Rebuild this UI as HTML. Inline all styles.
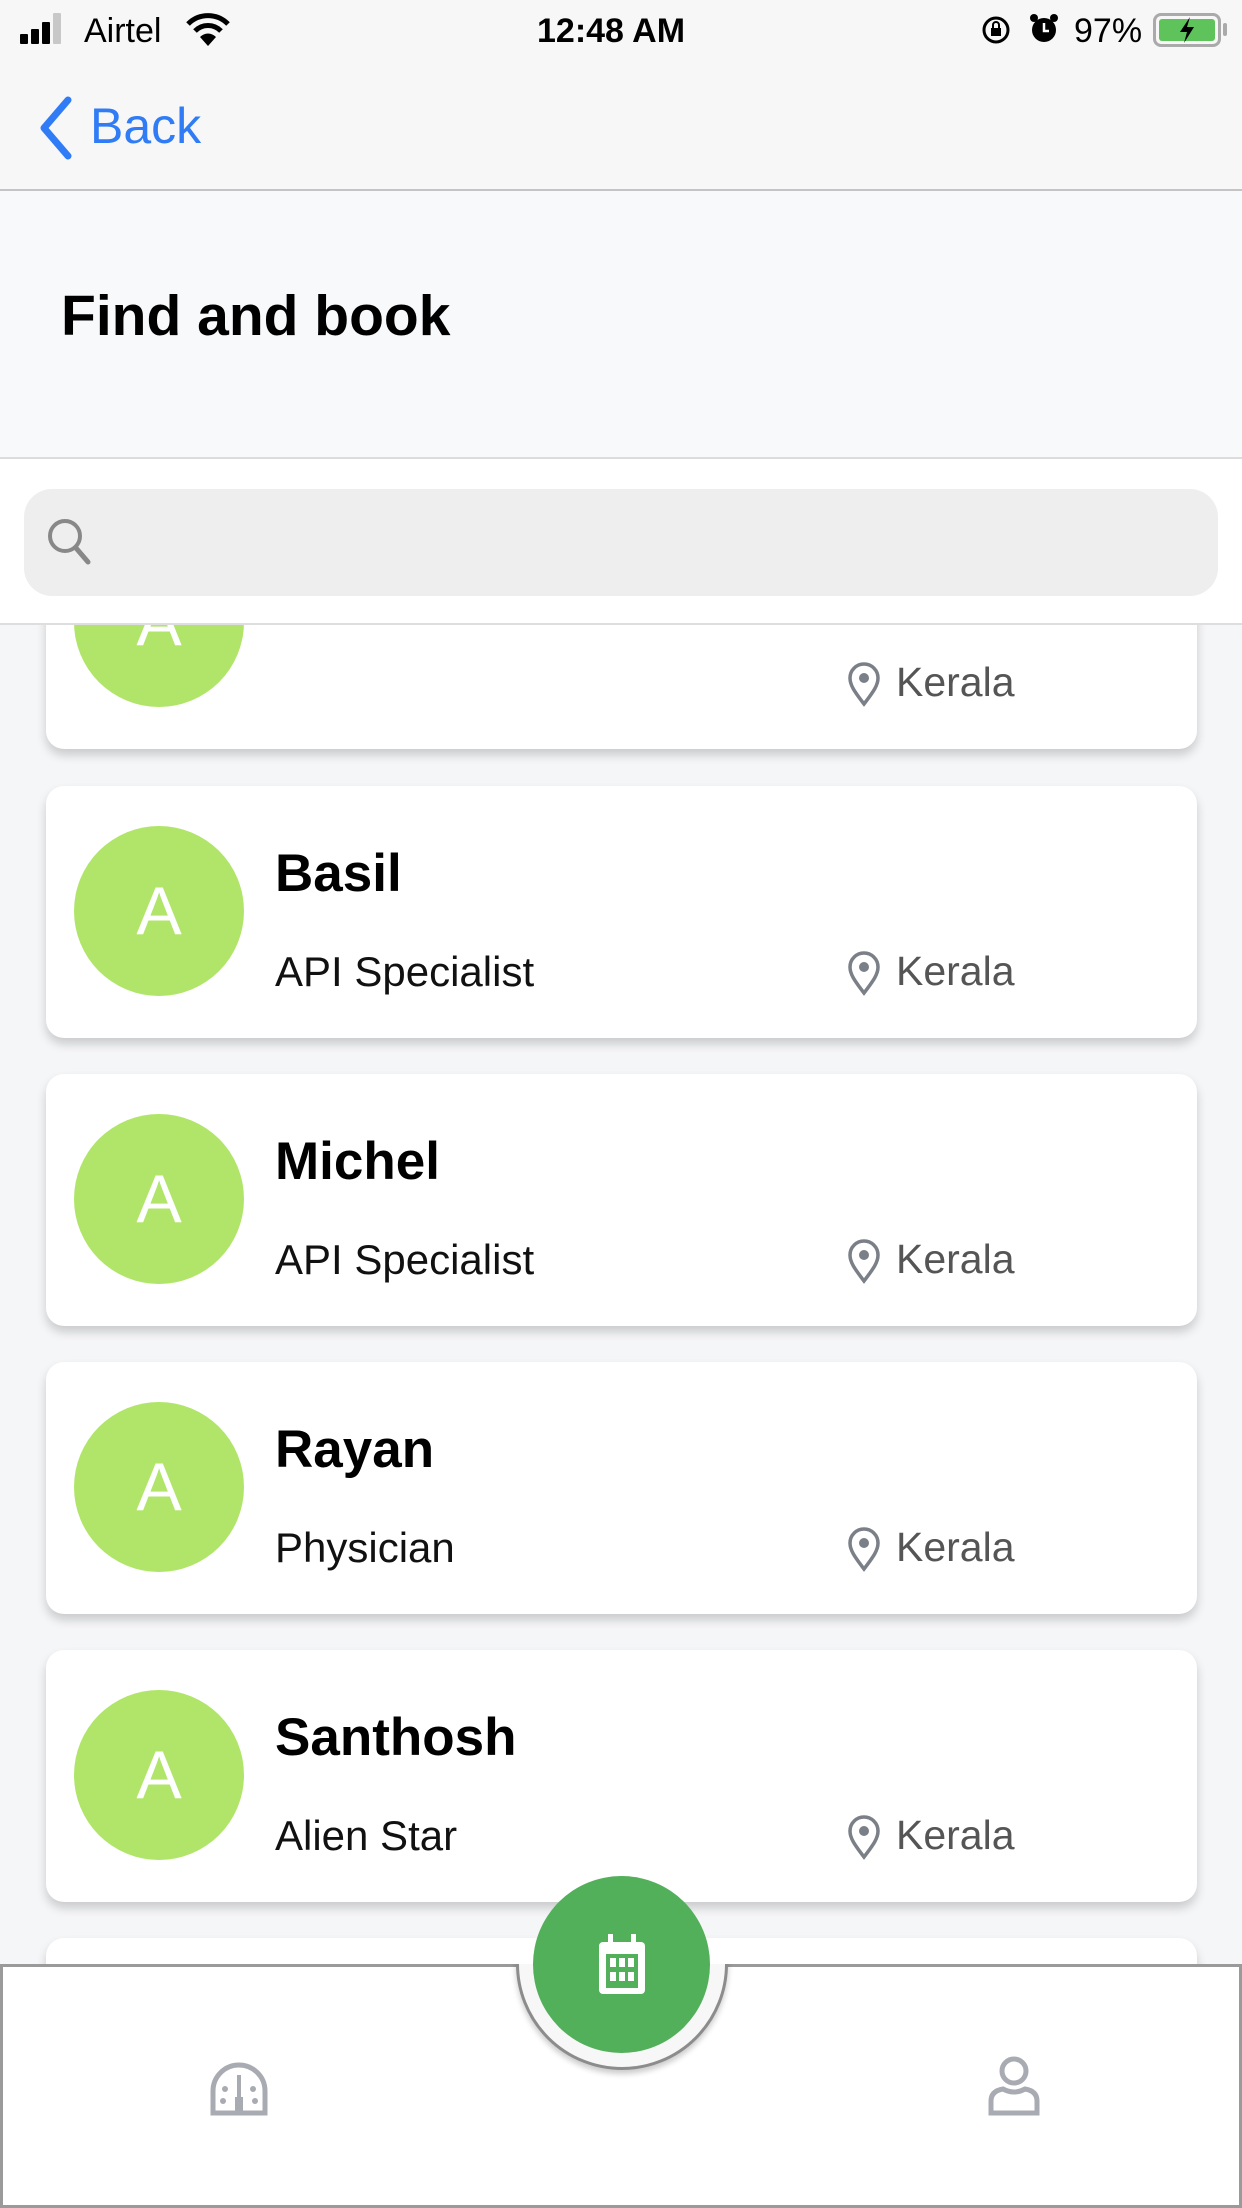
<!DOCTYPE html>
<html><head><meta charset="utf-8"><style>
*{margin:0;padding:0;box-sizing:border-box}
body{width:1242px;height:2208px;overflow:hidden;background:#f5f6f8;font-family:"Liberation Sans",sans-serif;position:relative}
.abs{position:absolute}
.status{left:0;top:0;width:1242px;height:191px;background:#f7f7f7;border-bottom:2px solid #c4c4c6}
.st{font-size:34px;color:#000;top:12px}
.head{left:0;top:191px;width:1242px;height:268px;background:#f8f9fb;border-bottom:2px solid #dcdcdc}
.title{left:61px;top:92px;font-size:57px;font-weight:bold;color:#000}
.sarea{left:0;top:459px;width:1242px;height:166px;background:#fff;border-bottom:2px solid #dedede;z-index:5}
.search{left:24px;top:30px;width:1194px;height:107px;background:#eeeeee;border-radius:28px}
.card{left:46px;width:1151px;height:252px;background:#fff;border-radius:18px;box-shadow:0 6px 10px rgba(0,0,0,.18)}
.av{left:28px;top:40px;width:170px;height:170px;border-radius:50%;background:#b0e56a;color:#fff;font-size:68px;text-align:center;line-height:170px}
.nm{left:229px;top:57px;font-size:53px;font-weight:bold;color:#000}
.sub{left:229px;top:162px;font-size:42px;color:#111}
.loc{left:804px;top:162px;font-size:41px;color:#555}
.loc svg{position:absolute;left:-4px;top:2px}
.loc span{margin-left:46px}
.bar{left:0;top:1964px;width:1242px;height:244px;background:#fff;border:3px solid #9a9a9a;border-top-width:3px;z-index:6}
</style></head><body>
<div class="abs status">
  <div class="abs" style="left:20px;top:34px;width:8px;height:10px;background:#000;border-radius:1px"></div>
  <div class="abs" style="left:31px;top:29px;width:8px;height:15px;background:#000;border-radius:1px"></div>
  <div class="abs" style="left:42px;top:22px;width:8px;height:22px;background:#000;border-radius:1px"></div>
  <div class="abs" style="left:53px;top:13px;width:8px;height:31px;background:#c8c8c8;border-radius:1px"></div>
  <div class="abs st" style="left:84px">Airtel</div>
  <svg class="abs" style="left:186px;top:12px" width="44" height="36" viewBox="0 0 44 36"><path d="M2 12 A28 28 0 0 1 42 12" stroke="#000" stroke-width="5" fill="none"/><path d="M9 19 A18 18 0 0 1 35 19" stroke="#000" stroke-width="5" fill="none"/><path d="M22 34 L14 25 A11 11 0 0 1 30 25Z" fill="#000"/></svg>
  <div class="abs st" style="left:537px;font-weight:bold;font-size:34px">12:48 AM</div>
  <svg class="abs" style="left:980px;top:14px" width="32" height="32" viewBox="0 0 32 32"><circle cx="16" cy="16" r="12" fill="none" stroke="#000" stroke-width="3"/><rect x="11" y="14" width="10" height="8" fill="#000"/><path d="M13 14v-3a3 3 0 0 1 6 0v3" stroke="#000" stroke-width="2" fill="none"/></svg>
  <svg class="abs" style="left:1028px;top:12px" width="32" height="34" viewBox="0 0 32 34"><circle cx="16" cy="18" r="12" fill="#000"/><path d="M16 11v8h5" stroke="#fff" stroke-width="2.5" fill="none"/><circle cx="6" cy="6" r="4" fill="#000"/><circle cx="26" cy="6" r="4" fill="#000"/></svg>
  <div class="abs st" style="left:1074px">97%</div>
  <div class="abs" style="left:1153px;top:13px;width:68px;height:34px;border:3px solid #aaa;border-radius:8px;padding:3px"><div style="width:100%;height:100%;background:#5dc35a;border-radius:3px"></div></div>
  <div class="abs" style="left:1223px;top:23px;width:4px;height:13px;background:#aaa;border-radius:2px"></div>
  <svg class="abs" style="left:1172px;top:15px" width="30" height="30" viewBox="0 0 30 30"><path d="M18 2 L8 17 H15 L12 28 L22 12 H15Z" fill="#000"/></svg>
  <svg class="abs" style="left:36px;top:96px" width="40" height="64" viewBox="0 0 40 64"><path d="M32 4 L8 32 L32 60" stroke="#2f7cf6" stroke-width="7" fill="none" stroke-linecap="round" stroke-linejoin="round"/></svg>
  <div class="abs" style="left:90px;top:97px;font-size:50px;color:#2f7cf6">Back</div>
</div>
<div class="abs head"><div class="abs title">Find and book</div></div>
<div class="abs sarea"><div class="abs search">
  <svg class="abs" style="left:20px;top:26px" width="54" height="56" viewBox="0 0 54 56"><circle cx="21" cy="21" r="15" fill="none" stroke="#888" stroke-width="4"/><path d="M32 33 L44 47" stroke="#888" stroke-width="5" stroke-linecap="round"/></svg>
</div></div>

<div class="abs card" style="top:497px"><div class="abs av">A</div><div class="abs loc"><svg width="36" height="46" viewBox="0 0 36 46"><path d="M18 43 C8 30 4 24 4 17 A14 14 0 0 1 32 17 C32 24 28 30 18 43Z" fill="none" stroke="#7a7f88" stroke-width="3.5"/><circle cx="18" cy="17" r="5" fill="#7a7f88"/></svg><span>Kerala</span></div></div>
<div class="abs card" style="top:786px"><div class="abs av">A</div><div class="abs nm">Basil</div><div class="abs sub">API Specialist</div><div class="abs loc"><svg width="36" height="46" viewBox="0 0 36 46"><path d="M18 43 C8 30 4 24 4 17 A14 14 0 0 1 32 17 C32 24 28 30 18 43Z" fill="none" stroke="#7a7f88" stroke-width="3.5"/><circle cx="18" cy="17" r="5" fill="#7a7f88"/></svg><span>Kerala</span></div></div>
<div class="abs card" style="top:1074px"><div class="abs av">A</div><div class="abs nm">Michel</div><div class="abs sub">API Specialist</div><div class="abs loc"><svg width="36" height="46" viewBox="0 0 36 46"><path d="M18 43 C8 30 4 24 4 17 A14 14 0 0 1 32 17 C32 24 28 30 18 43Z" fill="none" stroke="#7a7f88" stroke-width="3.5"/><circle cx="18" cy="17" r="5" fill="#7a7f88"/></svg><span>Kerala</span></div></div>
<div class="abs card" style="top:1362px"><div class="abs av">A</div><div class="abs nm">Rayan</div><div class="abs sub">Physician</div><div class="abs loc"><svg width="36" height="46" viewBox="0 0 36 46"><path d="M18 43 C8 30 4 24 4 17 A14 14 0 0 1 32 17 C32 24 28 30 18 43Z" fill="none" stroke="#7a7f88" stroke-width="3.5"/><circle cx="18" cy="17" r="5" fill="#7a7f88"/></svg><span>Kerala</span></div></div>
<div class="abs card" style="top:1650px"><div class="abs av">A</div><div class="abs nm">Santhosh</div><div class="abs sub">Alien Star</div><div class="abs loc"><svg width="36" height="46" viewBox="0 0 36 46"><path d="M18 43 C8 30 4 24 4 17 A14 14 0 0 1 32 17 C32 24 28 30 18 43Z" fill="none" stroke="#7a7f88" stroke-width="3.5"/><circle cx="18" cy="17" r="5" fill="#7a7f88"/></svg><span>Kerala</span></div></div>
<div class="abs card" style="top:1938px"></div>

<div class="abs bar">
  <svg class="abs" style="left:206px;top:94px" width="60" height="56" viewBox="0 0 60 56"><path d="M4 52 V30 A26 26 0 0 1 56 30 V52Z" fill="none" stroke="#a9abb2" stroke-width="5"/><path d="M30 14 V38" stroke="#a9abb2" stroke-width="4"/><rect x="26" y="36" width="8" height="14" fill="#a9abb2"/><circle cx="16" cy="28" r="3" fill="#a9abb2"/><circle cx="44" cy="28" r="3" fill="#a9abb2"/><circle cx="14" cy="40" r="3" fill="#a9abb2"/><circle cx="46" cy="40" r="3" fill="#a9abb2"/></svg>
  <svg class="abs" style="left:984px;top:88px" width="54" height="62" viewBox="0 0 54 62"><circle cx="27" cy="16" r="12" fill="none" stroke="#a9abb2" stroke-width="5"/><path d="M4 58 V46 Q4 36 16 34 Q27 40 38 34 Q50 36 50 46 V58Z" fill="none" stroke="#a9abb2" stroke-width="5"/></svg>
</div>
<div class="abs" style="left:516px;top:1858px;width:212px;height:212px;border-radius:50%;background:#f7f7f7;border:3px solid #8c8c8c;box-shadow:0 4px 6px rgba(0,0,0,.2);z-index:7;clip-path:inset(106px -10px -10px -10px)"></div>
<div class="abs" style="left:533px;top:1876px;width:177px;height:177px;border-radius:50%;background:#52af5a;z-index:8">
  <svg class="abs" style="left:62px;top:56px" width="54" height="64" viewBox="0 0 54 64"><rect x="4" y="10" width="46" height="52" rx="4" fill="#fff"/><rect x="11" y="22" width="32" height="34" fill="#52af5a"/><rect x="13" y="2" width="5" height="12" fill="#fff"/><rect x="36" y="2" width="5" height="12" fill="#fff"/><g fill="#fff"><rect x="15" y="26" width="6" height="9"/><rect x="24" y="26" width="6" height="9"/><rect x="33" y="26" width="6" height="9"/><rect x="15" y="40" width="6" height="9"/><rect x="24" y="40" width="6" height="9"/><rect x="33" y="40" width="6" height="9"/></g></svg>
</div>
</body></html>
